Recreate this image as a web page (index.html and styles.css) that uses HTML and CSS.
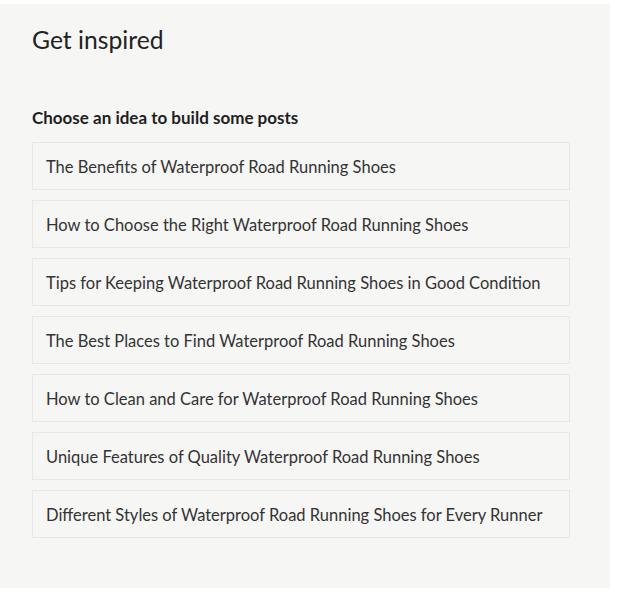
FILE: index.html
```html
<!DOCTYPE html>
<html>
<head>
<meta charset="utf-8">
<link rel="stylesheet" href="styles.css">
</head>
<body>
<div class="panel">
  <h1 class="title">Get inspired</h1>
  <h2 class="subtitle">Choose an idea to build some posts</h2>
  <ul class="ideas">
    <li class="idea">The Benefits of Waterproof Road Running Shoes</li>
    <li class="idea">How to Choose the Right Waterproof Road Running Shoes</li>
    <li class="idea">Tips for Keeping Waterproof Road Running Shoes in Good Condition</li>
    <li class="idea">The Best Places to Find Waterproof Road Running Shoes</li>
    <li class="idea">How to Clean and Care for Waterproof Road Running Shoes</li>
    <li class="idea">Unique Features of Quality Waterproof Road Running Shoes</li>
    <li class="idea">Different Styles of Waterproof Road Running Shoes for Every Runner</li>
  </ul>
</div>
</body>
</html>
```
FILE: styles.css
```css
html, body {
  margin: 0;
  padding: 0;
  background: #ffffff;
}
body {
  padding-top: 4px;
  font-family: Lato, "Liberation Sans", sans-serif;
  color: #2b2b2b;
}
.panel {
  width: 610px;
  height: 584px;
  box-sizing: border-box;
  background: #f6f6f5;
  padding: 19px 40px 0 32px;
}
.title {
  margin: 0;
  font-size: 24.7px;
  font-weight: 400;
  line-height: 34px;
  color: #222;
}
.subtitle {
  margin: 51px 0 0;
  font-size: 17px;
  font-weight: 700;
  line-height: 20px;
  color: #1f1f1f;
}
.ideas {
  list-style: none;
  margin: 14px 0 0;
  padding: 0;
  display: flex;
  flex-direction: column;
  gap: 10px;
}
.idea {
  height: 48px;
  box-sizing: border-box;
  border: 1px solid #e7e7e6;
  padding: 1px 12px 0 13px;
  display: flex;
  align-items: center;
  font-size: 16.5px;
  color: #333;
}
```
